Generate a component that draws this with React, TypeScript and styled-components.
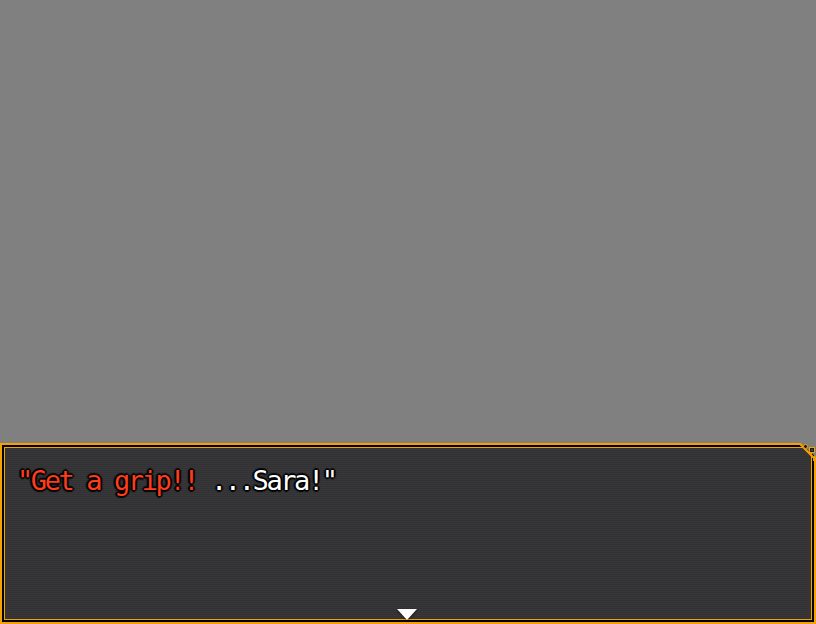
import React from "react";
import styled, { createGlobalStyle } from "styled-components";

const GlobalStyle = createGlobalStyle`
  html, body {
    margin: 0;
    padding: 0;
    background: #808080;
  }
`;

const Screen = styled.div`
  display: flex;
  flex-direction: column;
  width: 816px;
  height: 624px;
  overflow: hidden;
  background: #808080;
`;

const Stage = styled.div`
  flex: 1;
`;

const MessageWindow = styled.div`
  position: relative;
  box-sizing: border-box;
  height: 181px;
  display: flex;
  flex-direction: column;
  padding: 18px 18px 2px 15px;
  border: 2px solid #f5a100;
  background-color: #333335;
  background-image: repeating-linear-gradient(
    to bottom,
    rgba(255, 255, 255, 0.018) 0px,
    rgba(255, 255, 255, 0.018) 1px,
    rgba(0, 0, 0, 0.02) 1px,
    rgba(0, 0, 0, 0.02) 2px
  );
  box-shadow: inset 0 0 0 2px #000, inset 0 0 0 3px #f5a100;
`;

const Line = styled.div`
  font-family: "DejaVu Sans Mono", "Liberation Mono", monospace;
  font-size: 27px;
  letter-spacing: -2.4px;
  line-height: 36px;
  white-space: pre;
  color: #ffffff;
  text-shadow: -2px 0 1px rgba(0, 0, 0, 0.85), 2px 0 1px rgba(0, 0, 0, 0.85),
    0 -2px 1px rgba(0, 0, 0, 0.85), 0 2px 1px rgba(0, 0, 0, 0.85),
    -1px -1px 1px rgba(0, 0, 0, 0.85), 1px 1px 1px rgba(0, 0, 0, 0.85),
    1px -1px 1px rgba(0, 0, 0, 0.85), -1px 1px 1px rgba(0, 0, 0, 0.85);
`;

const Shout = styled.span<{ $tone: string }>`
  color: ${(p) => p.$tone};
`;

const PauseArrow = styled.div`
  margin-top: auto;
  align-self: center;
  width: 0;
  height: 0;
  border-left: 10px solid transparent;
  border-right: 10px solid transparent;
  border-top: 11px solid #ffffff;
  filter: drop-shadow(0 1px 1px rgba(0, 0, 0, 0.6));
`;

const CornerMark = styled.svg`
  position: absolute;
  top: -2px;
  right: -2px;
`;

const Corner = () => (
  <CornerMark width="18" height="18" viewBox="0 0 18 18">
    <path d="M2 0 H18 V14 L9 6 Z" fill="#808080" />
    <path d="M0 1 H2 L5 4 L8 7 L13 12 L16 15 V18" stroke="#f5a100" strokeWidth="2" fill="none" />
    <circle cx="7.5" cy="3.5" r="2" stroke="#f5a100" strokeWidth="1" fill="#1a1a1a" />
    <rect x="11.5" y="4.5" width="5" height="5" stroke="#f5a100" strokeWidth="1" fill="#1a1a1a" />
    <rect x="13.5" y="6.5" width="1" height="1" fill="#f5a100" />
  </CornerMark>
);

const App = () => {
  return (
    <Screen>
      <GlobalStyle />
      <Stage />
      <MessageWindow>
        <Line>
          <Shout $tone="#ff3c1c">"Get a grip!!</Shout> ...Sara!"
        </Line>
        <PauseArrow />
        <Corner />
      </MessageWindow>
    </Screen>
  );
};

export default App;
